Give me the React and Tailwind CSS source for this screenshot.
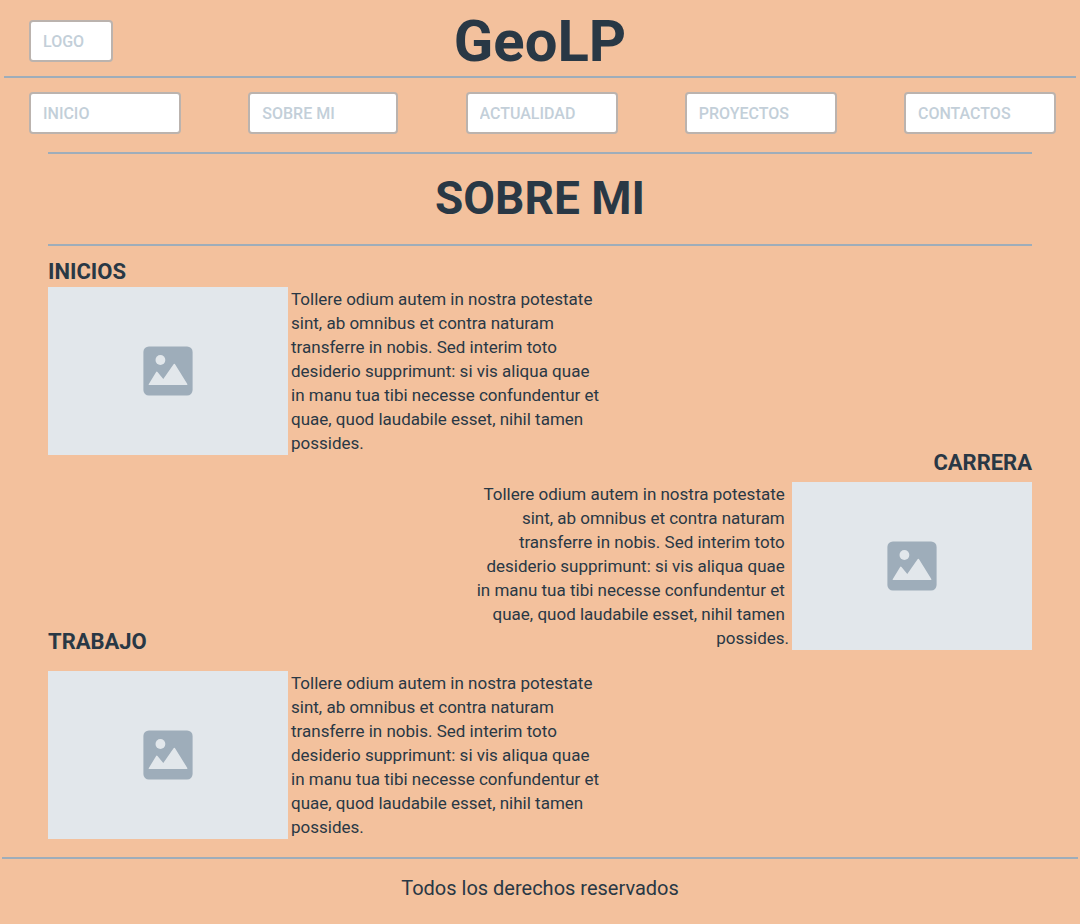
const LINES = [
  "Tollere odium autem in nostra potestate",
  "sint, ab omnibus et contra naturam",
  "transferre in nobis. Sed interim toto",
  "desiderio supprimunt: si vis aliqua quae",
  "in manu tua tibi necesse confundentur et",
  "quae, quod laudabile esset, nihil tamen",
  "possides.",
];

// Each line keeps its closing space, so right-aligned lines stay clear of the picture.
const BODY = LINES.join("\u00a0\n");

const NAV = [
  { label: "INICIO", width: "w-[152px]" },
  { label: "SOBRE MI", width: "w-[150px]" },
  { label: "ACTUALIDAD", width: "w-[152px]" },
  { label: "PROYECTOS", width: "w-[152px]" },
  { label: "CONTACTOS", width: "w-[152px]" },
];

function Field({ label, width }) {
  return (
    <input
      type="text"
      aria-label={label}
      placeholder={label}
      className={`${width} h-[42px] min-w-0 rounded border-2 border-[#bbb3ae] bg-white px-3 text-base font-medium text-[#293845] outline-none placeholder:text-[#c3cfd9]`}
    />
  );
}

function Picture() {
  return (
    <div className="flex h-[168px] w-60 shrink-0 items-center justify-center bg-[#e2e7eb]">
      <svg width="50" height="50" viewBox="0 0 50 50" aria-hidden="true">
        <rect x="0.4" y="0.4" width="49.2" height="49.2" rx="5.5" fill="#9eadba" />
        <circle cx="17.4" cy="14" r="4.9" fill="#e2e7eb" />
        <path
          d="M5.7 39V38.2L13 26.2Q13.7 25 14.5 26L20.3 33L30.4 18.4Q31.3 17.2 32.2 18.4L44.3 38V39Z"
          fill="#e2e7eb"
        />
      </svg>
    </div>
  );
}

function Story({ title, reverse, className }) {
  return (
    <section className={`flex flex-col ${className}`}>
      <h3 className={`text-[22px] leading-[14px] font-bold ${reverse ? "text-right" : ""}`}>{title}</h3>
      <div className={`flex gap-[3px] ${reverse ? "flex-row-reverse" : ""}`}>
        <Picture />
        <p className={`text-[17px] leading-6 whitespace-pre ${reverse ? "text-right" : ""}`}>{BODY}</p>
      </div>
    </section>
  );
}

export default function App() {
  return (
    <div className="flex min-h-screen flex-col bg-[#f3c19d] font-[Roboto,sans-serif] text-[#293845]">
      <header>
        <div className="mx-1 grid grid-cols-[1fr_auto_1fr] items-center border-b-2 border-[#9eadba] px-[25px] pt-[7px] pb-px">
          <Field label="LOGO" width="w-[84px]" />
          <h1 className="text-[58px] leading-[68px] font-bold">GeoLP</h1>
        </div>
        <nav className="flex justify-between pt-3.5 pr-6 pb-[18px] pl-[29px]">
          {NAV.map((item) => (
            <Field key={item.label} {...item} />
          ))}
        </nav>
      </header>
      <main className="px-12">
        <h2 className="border-y-2 border-[#9eadba] pt-[15px] pb-[17px] text-center text-[46px] leading-[58px] font-bold">
          SOBRE MI
        </h2>
        <Story title="INICIOS" className="mt-[19px] gap-2" />
        <Story title="CARRERA" className="mt-px gap-3" reverse />
        <Story title="TRABAJO" className="-mt-[15px] gap-[22px]" />
      </main>
      <footer className="mx-0.5 mt-[18px] border-t-2 border-[#9eadba] pt-[15px] pb-[21px] text-center text-xl">
        Todos los derechos reservados
      </footer>
    </div>
  );
}
